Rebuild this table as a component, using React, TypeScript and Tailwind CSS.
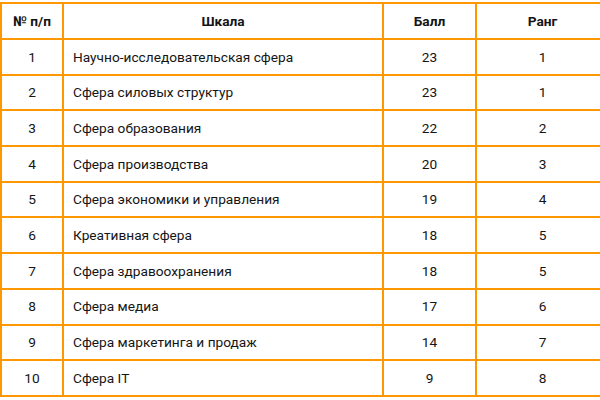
const rows: [number, string, number, number][] = [
  [1, "Научно-исследовательская сфера", 23, 1],
  [2, "Сфера силовых структур", 23, 1],
  [3, "Сфера образования", 22, 2],
  [4, "Сфера производства", 20, 3],
  [5, "Сфера экономики и управления", 19, 4],
  [6, "Креативная сфера", 18, 5],
  [7, "Сфера здравоохранения", 18, 5],
  [8, "Сфера медиа", 17, 6],
  [9, "Сфера маркетинга и продаж", 14, 7],
  [10, "Сфера IT", 9, 8],
];

export default function App() {
  return (
    <div className="w-[600px] h-[400px] overflow-hidden bg-white pt-[2px] font-['Roboto',sans-serif] text-[13.7px] text-[#151515]">
      <table className="w-[608px] table-fixed border-collapse">
        <colgroup>
          <col className="w-[62px]" />
          <col className="w-[320px]" />
          <col className="w-[93px]" />
          <col className="w-[133px]" />
        </colgroup>
        <thead>
          <tr className="h-[36px]">
            <th className="border-2 border-[#ff9800] text-center font-bold">№ п/п</th>
            <th className="border-2 border-[#ff9800] text-center font-bold">Шкала</th>
            <th className="border-2 border-[#ff9800] text-center font-bold">Балл</th>
            <th className="border-2 border-[#ff9800] text-center font-bold">Ранг</th>
          </tr>
        </thead>
        <tbody>
          {rows.map(([n, name, score, rank]) => (
            <tr key={n} className="h-[35.7px]">
              <td className="border-2 border-[#ff9800] text-center">{n}</td>
              <td className="border-2 border-[#ff9800] pl-[9px]">{name}</td>
              <td className="border-2 border-[#ff9800] text-center">{score}</td>
              <td className="border-2 border-[#ff9800] text-center">{rank}</td>
            </tr>
          ))}
        </tbody>
      </table>
    </div>
  );
}
